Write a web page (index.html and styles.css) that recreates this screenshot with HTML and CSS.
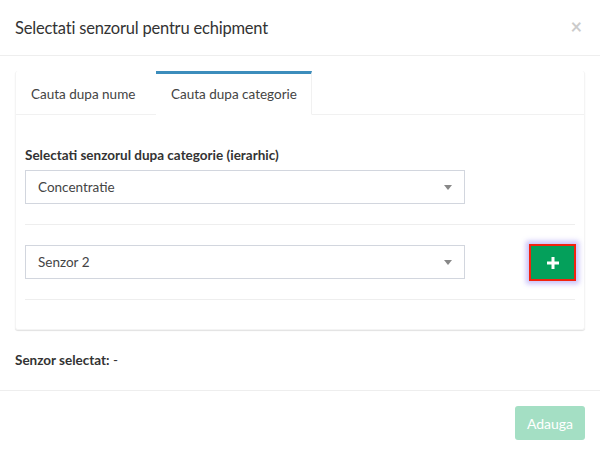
FILE: index.html
```html
<!DOCTYPE html>
<html lang="ro">
<head>
  <meta charset="UTF-8">
  <title>Selectati senzorul</title>
  <link rel="stylesheet" href="styles.css">
</head>
<body>
  <div class="modal">
    <div class="modal-header">
      <h4 class="modal-title">Selectati senzorul pentru echipment</h4>
      <span class="close">&times;</span>
    </div>

    <div class="modal-body">
      <div class="tabs-box">
        <ul class="tabs">
          <li class="tab">Cauta dupa nume</li>
          <li class="tab active">Cauta dupa categorie</li>
        </ul>

        <div class="tab-content">
          <label class="field-label">Selectati senzorul dupa categorie (ierarhic)</label>
          <div class="select-row">
            <div class="select-box">
              <span>Concentratie</span>
              <span class="caret"></span>
            </div>
          </div>

          <hr>

          <div class="select-row">
            <div class="select-box">
              <span>Senzor 2</span>
              <span class="caret"></span>
            </div>
            <button class="btn-add-sensor">
              <svg width="12" height="12" viewBox="0 0 12 12">
                <rect x="4.5" y="0" width="3" height="12" fill="#fff"/>
                <rect x="0" y="4.5" width="12" height="3" fill="#fff"/>
              </svg>
            </button>
          </div>

          <hr>
        </div>
      </div>

      <p class="selected"><b>Senzor selectat:</b> -</p>
    </div>

    <div class="modal-footer">
      <button class="btn-save" disabled>Adauga</button>
    </div>
  </div>
</body>
</html>
```

FILE: styles.css
```css
body {
  margin: 0;
  background: #fff;
  font-family: "Lato", "Open Sans", sans-serif;
  font-size: 14px;
  color: #333;
}

.modal {
  width: 600px;
}

.modal-header {
  display: flex;
  justify-content: space-between;
  align-items: center;
  padding: 15px;
  height: 25px;
  border-bottom: 1px solid #eeeeee;
}

.modal-title {
  margin: 0;
  font-size: 16.5px;
  letter-spacing: -0.2px;
  font-weight: normal;
  color: #333;
  line-height: 26px;
}

.close {
  font-size: 20px;
  font-weight: bold;
  color: #000;
  opacity: 0.2;
  margin-right: 3px;
  margin-top: -4px;
}

.modal-body {
  padding: 15px 15px 0;
  height: 319px;
  box-sizing: content-box;
}

.tabs-box {
  background: #fff;
  border: 1px solid #f4f4f4;
  border-top: none;
  border-radius: 3px;
  box-shadow: 0 1px 1px rgba(0, 0, 0, 0.12);
}

.tabs {
  display: flex;
  margin: 0;
  padding: 0;
  list-style: none;
  border-bottom: 1px solid #f1f1f1;
}

.tab {
  box-sizing: border-box;
  padding: 0 15px;
  height: 44px;
  line-height: 40px;
  white-space: nowrap;
  border-top: 3px solid transparent;
  color: #444;
  margin-bottom: -1px;
  font-size: 13.5px;
}

.tab:first-child {
  width: 140px;
}

.tab.active {
  width: 156px;
  border-top-color: #3c8dbc;
  border-right: 1px solid #f1f1f1;
  border-bottom: 1px solid #fff;
}

.tab-content {
  padding: 30px 9px 9px;
}

.field-label {
  display: block;
  font-weight: bold;
  font-size: 13.5px;
  line-height: 20px;
  color: #333;
  margin-bottom: 5px;
}

.select-row {
  display: flex;
  align-items: flex-start;
  justify-content: space-between;
  height: 34px;
}

.select-box {
  display: flex;
  align-items: center;
  justify-content: space-between;
  width: 440px;
  height: 34px;
  box-sizing: border-box;
  padding: 0 12px;
  border: 1px solid #d2d6de;
  color: #444;
  font-size: 13.5px;
}

.caret {
  width: 0;
  height: 0;
  border-left: 4px solid transparent;
  border-right: 4px solid transparent;
  border-top: 5px solid #888;
}

hr {
  border: none;
  border-top: 1px solid #eeeeee;
  margin: 20px 0;
}

.btn-add-sensor {
  display: flex;
  align-items: center;
  justify-content: center;
  flex-shrink: 0;
  width: 47px;
  height: 37px;
  margin-top: -1px;
  margin-right: -1px;
  background: #04a05b;
  border: 2px solid #f2230f;
  box-shadow: 0 0 5px 3px rgba(120, 100, 240, 0.4);
  padding: 0;
}

.selected {
  margin: 20px 0 0;
  line-height: 20px;
  font-size: 13.5px;
}

.modal-footer {
  display: flex;
  justify-content: flex-end;
  padding: 15px;
  border-top: 1px solid #eeeeee;
}

.btn-save {
  height: 34px;
  width: 70px;
  border: none;
  border-radius: 3px;
  background: #a4dfc4;
  color: #fff;
  font-family: "Lato", sans-serif;
  font-size: 14px;
}
```
